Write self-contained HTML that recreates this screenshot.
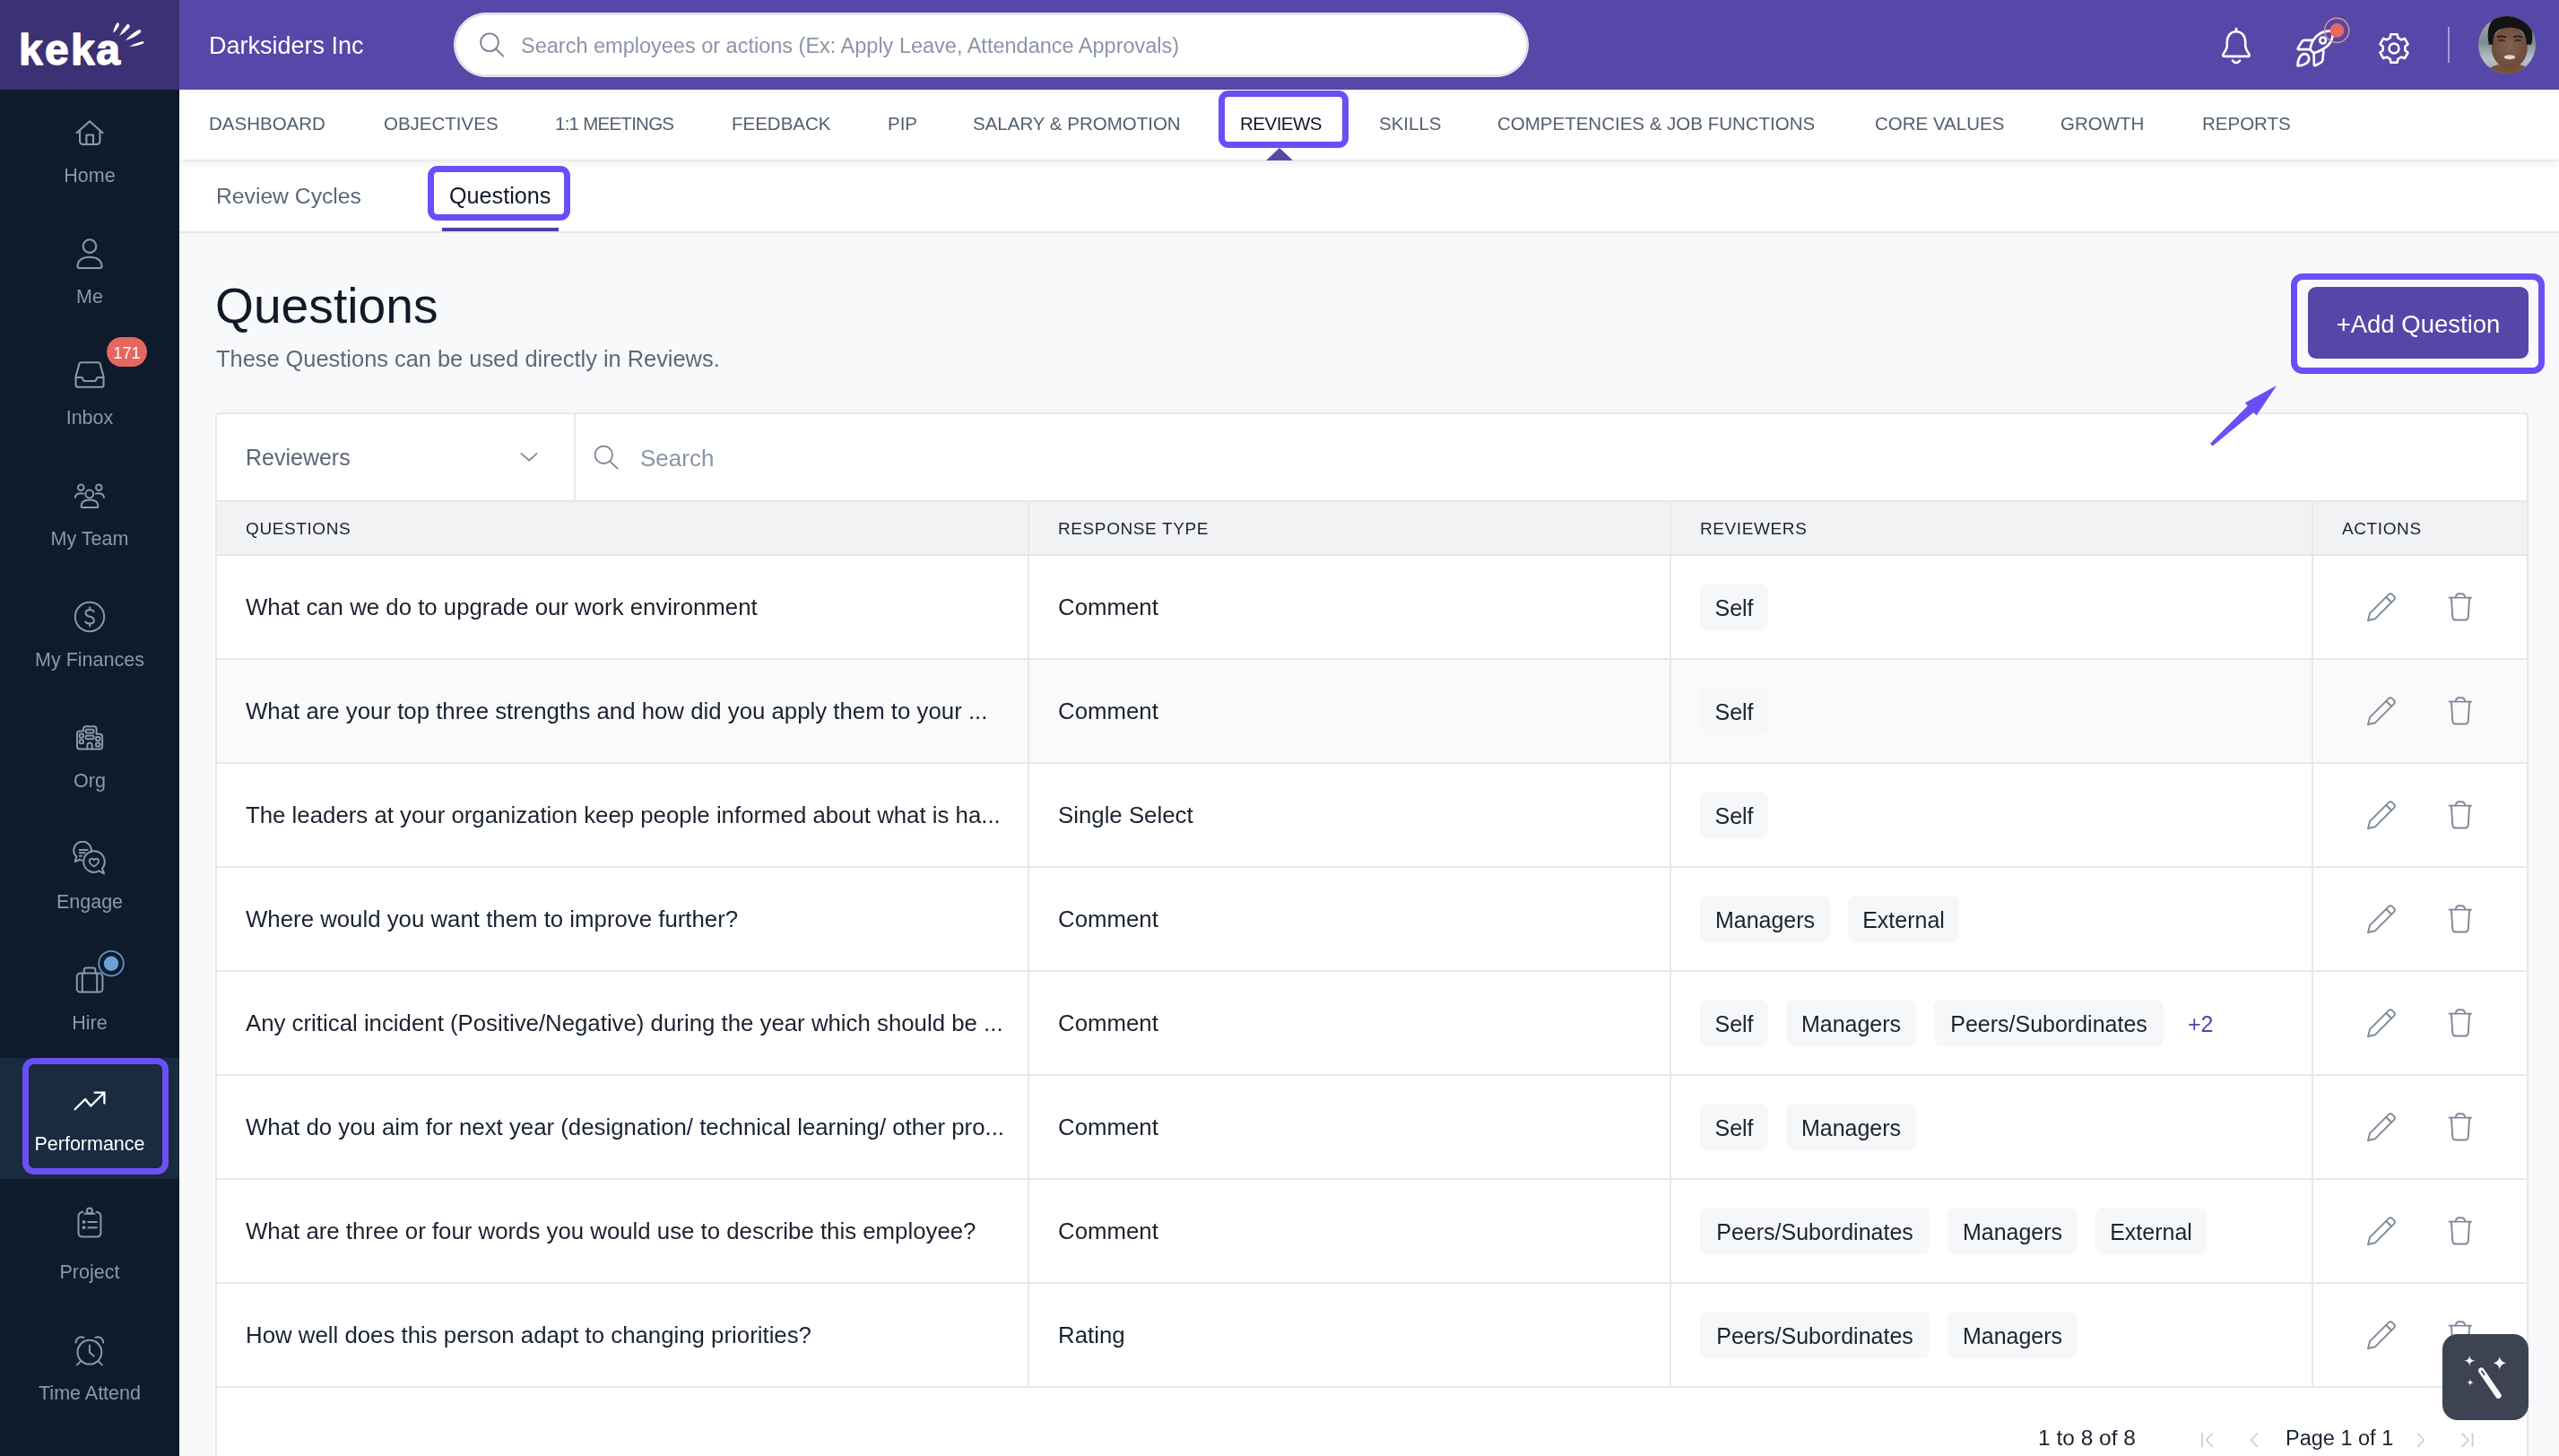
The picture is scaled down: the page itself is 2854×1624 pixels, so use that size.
<!DOCTYPE html>
<html><head><meta charset="utf-8">
<style>
*{box-sizing:border-box;margin:0;padding:0}
html,body{width:2854px;height:1624px;overflow:hidden;background:#f8f9fb;font-family:"Liberation Sans",sans-serif}
.t{will-change:transform}
.a{position:absolute}
.t{position:absolute;line-height:1;white-space:nowrap}
#logo{left:0;top:0;width:200px;height:100px;background:#3c3175}
#hdr{left:200px;top:0;width:2654px;height:100px;background:#5647a8}
#side{left:0;top:100px;width:200px;height:1524px;background:#0e1b2a}
#nav{left:200px;top:100px;width:2654px;height:78px;background:#fff;box-shadow:0 5px 8px rgba(30,40,50,.075),0 1px 2px rgba(30,40,50,.06);z-index:3}
#sub{left:200px;top:178px;width:2654px;height:82px;background:#fff;border-bottom:2px solid #e6e8ec;z-index:2}
.nv{font-size:20.5px;color:#536070;top:127.6px}
.hl{position:absolute;border:7px solid #6a4ff6;border-radius:11px}
.sl{font-size:21.5px;color:#8e98a5;text-align:center;width:200px;left:0}
.si{position:absolute;left:0;width:200px;display:flex;justify-content:center}
</style></head><body>
<!-- header -->
<div id="logo" class="a">
<svg class="a" style="left:0;top:0" width="200" height="100" viewBox="0 0 200 100">
<g fill="#fff">
<text x="21 50 79 107.2" y="72" font-family="Liberation Sans" font-weight="700" font-size="48" stroke="#fff" stroke-width="1.4" stroke-linejoin="round">keka</text>
<path d="M126 37 q2 -9 5 -12 q3 1 1 5 q-3 5 -6 7z"/>
<path d="M133 40 q4 -8 9 -13 q4 0 2 4 q-5 6 -11 9z"/>
<path d="M140 45 q6 -7 15 -12 q4 1 1 4 q-8 6 -16 8z"/>
<path d="M144 52 q7 -4 15 -6 q3 1 0 3 q-7 3 -15 3z"/>
</g></svg>
</div>
<div id="hdr" class="a"></div>
<div class="t" style="left:233px;top:38.1px;font-size:27px;color:#fff">Darksiders Inc</div>
<div class="a" style="left:506px;top:14px;width:1199px;height:72px;background:#fff;border-radius:36px;border:1px solid #eceef3;box-shadow:inset 0 0 0 1.5px #d6d8e2"></div>
<svg class="a" style="left:530px;top:33px" width="36" height="36" viewBox="0 0 36 36"><circle cx="16" cy="14.25" r="9.9" fill="none" stroke="#7b8598" stroke-width="1.9"/><path d="M22.8 21.3 L31.3 29.6" stroke="#7b8598" stroke-width="2" stroke-linecap="round"/></svg>
<div class="t" style="left:581px;top:40.1px;font-size:23.5px;color:#8b95a7">Search employees or actions (Ex: Apply Leave, Attendance Approvals)</div>


<!-- header right icons -->
<svg class="a" style="left:2474px;top:28px" width="40" height="48" viewBox="0 0 40 48" fill="none" stroke="#fff" stroke-width="2.6" stroke-linecap="round" stroke-linejoin="round">
<path d="M20 4 V6.8"/><path d="M20 7.2 C13.5 7.2 9.8 12.5 9.8 19 V22.5 C9.8 26.5 7.5 29.5 5.6 32.3 Q4.2 34.8 7.2 34.9 H32.8 Q35.8 34.8 34.4 32.3 C32.5 29.5 30.2 26.5 30.2 22.5 V19 C30.2 12.5 26.5 7.2 20 7.2 Z"/><path d="M16 39.6 Q20 44.5 24 39.6"/></svg>
<svg class="a" style="left:2558px;top:30px" width="48" height="48" viewBox="0 0 48 48" fill="none" stroke="#fff" stroke-width="2.7" stroke-linecap="round" stroke-linejoin="round">
<path d="M18.6 25.2 C19.6 14.5 27.5 5 39.5 4.6 Q43.8 4.4 43.6 8.6 C43.2 17.5 37.5 24.5 22.6 29.2 Q20.2 27.4 18.6 25.2 Z"/><circle cx="32.6" cy="15.1" r="3.4"/>
<path d="M18.6 25.2 L5.6 25.2 Q4.2 25 4.9 23.6 L9.2 16.6 Q10.4 14.8 12.6 14.8 L20.8 14.8"/>
<path d="M22.6 29.2 L22.9 42.2 Q23.1 43.6 24.4 43 L30.4 39.9 Q32.2 38.9 32.4 36.9 L33.4 27"/>
<path d="M4.6 43.4 C4.7 35 8 30.2 12.4 30.2 C15.4 30.2 17.4 32.6 17.2 35.6 C16.9 40 12 43.1 4.6 43.4 Z"/></svg>
<svg class="a" style="left:2587px;top:14px" width="40" height="40" viewBox="0 0 40 40"><circle cx="19.2" cy="19.9" r="13.6" fill="none" stroke="#df958d" stroke-width="1.4"/><circle cx="19.5" cy="20" r="7.9" fill="#e8695f"/></svg>
<svg class="a" style="left:2650px;top:34px" width="40" height="40" viewBox="0 0 40 40" fill="none" stroke="#fff" stroke-width="2.6" stroke-linejoin="round">
<path d="M15.69 8.16 L16.36 4.22 L23.64 4.22 L24.31 8.16 L28.10 10.35 L31.85 8.95 L35.49 15.26 L32.41 17.81 L32.41 22.19 L35.49 24.74 L31.85 31.05 L28.10 29.65 L24.31 31.84 L23.64 35.78 L16.36 35.78 L15.69 31.84 L11.90 29.65 L8.15 31.05 L4.51 24.74 L7.59 22.19 L7.59 17.81 L4.51 15.26 L8.15 8.95 L11.90 10.35 Z"/><circle cx="20" cy="20" r="5.4"/></svg>
<div class="a" style="left:2730px;top:30px;width:2px;height:40px;background:#a39be0"></div>
<svg class="a" style="left:2764px;top:18px" width="64" height="64" viewBox="0 0 64 64">
<defs><clipPath id="av"><circle cx="32" cy="32" r="32"/></clipPath><linearGradient id="avbg" x1="0" y1="0" x2="0" y2="1"><stop offset="0" stop-color="#9fabb2"/><stop offset=".45" stop-color="#7d8c92"/><stop offset=".75" stop-color="#b7c2c7"/><stop offset="1" stop-color="#98a5ab"/></linearGradient>
<radialGradient id="face" cx=".5" cy=".45" r=".55"><stop offset="0" stop-color="#86624e"/><stop offset="1" stop-color="#6a4a3a"/></radialGradient></defs>
<g clip-path="url(#av)"><rect width="64" height="64" fill="url(#avbg)"/>
<path d="M6 64 Q14 53 34 53 Q54 53 62 64 Z" fill="#7a5034"/>
<ellipse cx="34.8" cy="35" rx="20" ry="23.5" fill="url(#face)"/>
<path d="M12.5 31 Q9.5 16 15.5 6 Q23 -3 36 -2 Q52 -1 58 12 Q61 22 58.5 31 L54.5 31 Q54 18.5 47 14.5 Q41 11.5 34.8 12 Q28 11.5 22.5 14.5 Q15.5 18.5 15.5 31 Z" fill="#131313" stroke="#131313" stroke-width="1.6"/>
<path d="M21 23.5 Q26 21.5 31 23.5 M39 23.5 Q44 21.5 49 23.5" stroke="#2e1f17" stroke-width="2.2" fill="none"/>
<path d="M22.5 27.5 Q26 26 29.5 27.8 M40.5 27.8 Q44 26 47.5 27.5" stroke="#3a281e" stroke-width="2" fill="none"/>
<ellipse cx="35" cy="45.8" rx="6.2" ry="2.5" fill="#e4d2cc"/>
</g></svg>

<!-- nav -->
<div id="nav" class="a"></div>
<div class="a" style="left:0;top:0;z-index:4">
<div class="t nv" style="left:233px">DASHBOARD</div>
<div class="t nv" style="left:428px">OBJECTIVES</div>
<div class="t nv" style="left:619px;letter-spacing:-0.75px">1:1 MEETINGS</div>
<div class="t nv" style="left:816px">FEEDBACK</div>
<div class="t nv" style="left:989.5px">PIP</div>
<div class="t nv" style="left:1084.5px">SALARY &amp; PROMOTION</div>
<div class="t nv" style="left:1383px;color:#111827;letter-spacing:-0.5px">REVIEWS</div>
<div class="t nv" style="left:1538px">SKILLS</div>
<div class="t nv" style="left:1670px">COMPETENCIES &amp; JOB FUNCTIONS</div>
<div class="t nv" style="left:2091px">CORE VALUES</div>
<div class="t nv" style="left:2298px">GROWTH</div>
<div class="t nv" style="left:2456px">REPORTS</div>
<div class="hl" style="left:1359px;top:101px;width:145px;height:64px"></div>
<svg class="a" style="left:1412px;top:165px" width="30" height="14"><path d="M0 14 L15 0 L30 14z" fill="#5647a8"/></svg>
</div>

<!-- sub tabs -->
<div id="sub" class="a"></div>
<div class="a" style="left:0;top:0;z-index:4">
<div class="t" style="left:241px;top:207px;font-size:24.7px;color:#5b6676">Review Cycles</div>
<div class="t" style="left:501px;top:206.3px;font-size:25.2px;color:#111827">Questions</div>
<div class="hl" style="left:477px;top:185px;width:159px;height:61px"></div>
<div class="a" style="left:493px;top:254px;width:130px;height:4px;background:#4f409f"></div>
</div>

<!-- sidebar -->
<div id="side" class="a"></div>
<div class="a" style="left:0;top:1180px;width:200px;height:135px;background:#1a2a3f"></div>
<div class="hl" style="left:25px;top:1180px;width:163px;height:130px;border-radius:13px"></div>
<svg class="a" style="left:80px;top:128px" width="40" height="40" viewBox="0 0 40 40" fill="none" stroke="#8e98a5" stroke-width="2.1" stroke-linecap="round" stroke-linejoin="round">
<path d="M5.5 20.2 L20 7.2 L34.6 20.2"/><path d="M9 18 V29 Q9 33 13 33 H27.5 Q31.5 33 31.5 29 V18"/><path d="M16.4 33 V22.5 H24 V33"/></svg>
<svg class="a" style="left:80px;top:263px" width="40" height="40" viewBox="0 0 40 40" fill="none" stroke="#8e98a5" stroke-width="2.1" stroke-linejoin="round">
<circle cx="20" cy="11.6" r="7.3"/><path d="M6.5 34 C6.5 27.5 12 23.8 20 23.8 C28 23.8 33.5 27.5 33.5 34 C33.5 35.2 32.6 36 31.5 36 H8.5 C7.4 36 6.5 35.2 6.5 34 Z"/></svg>
<svg class="a" style="left:80px;top:398px" width="40" height="40" viewBox="0 0 40 40" fill="none" stroke="#8e98a5" stroke-width="2.1" stroke-linecap="round" stroke-linejoin="round">
<path d="M10 6.2 H30 Q31 6.2 31.4 7.2 L35.5 22 V31.5 Q35.5 33.8 33.2 33.8 H6.8 Q4.5 33.8 4.5 31.5 V22 L8.6 7.2 Q9 6.2 10 6.2 Z"/><path d="M4.8 23 H11.5 L13 26 Q13.5 27 14.5 27 H25.5 Q26.5 27 27 26 L28.5 23 H35.2"/></svg>
<svg class="a" style="left:80px;top:533px" width="40" height="40" viewBox="0 0 40 40" fill="none" stroke="#8e98a5" stroke-width="2" stroke-linecap="round" stroke-linejoin="round">
<circle cx="10.3" cy="10.7" r="3.3"/><circle cx="30.3" cy="10.7" r="3.3"/><circle cx="19.8" cy="18" r="4.4"/>
<path d="M3.8 21.8 Q4.5 17.2 10.5 17.2 Q12 17.2 13 17.6"/><path d="M36 21.8 Q35.3 17.2 29.5 17.2 Q28 17.2 27 17.6"/>
<path d="M10.5 32 C10.5 27 14.5 24.6 20 24.6 C25.5 24.6 29.5 27 29.5 32 Q29.5 33 28.5 33 H11.5 Q10.5 33 10.5 32 Z"/></svg>
<svg class="a" style="left:80px;top:668px" width="40" height="40" viewBox="0 0 40 40" fill="none" stroke="#8e98a5" stroke-width="2" stroke-linecap="round" stroke-linejoin="round">
<circle cx="20" cy="20" r="16.2"/><path d="M24.6 14.2 Q23.6 12.2 20.2 12.2 Q15.6 12.2 15.6 15.8 Q15.6 18.8 20.2 19.8 Q24.8 20.8 24.8 24.2 Q24.8 27.6 20.2 27.6 Q16.6 27.6 15.4 25.4"/><path d="M20.2 9.5 V12.2 M20.2 27.6 V30.4"/></svg>
<svg class="a" style="left:80px;top:803px" width="40" height="40" viewBox="0 0 40 40" fill="none" stroke="#8e98a5" stroke-width="2" stroke-linecap="round" stroke-linejoin="round">
<path d="M13 12.6 V10 Q13 7.3 15.7 7.3 H24.9 Q27.6 7.3 27.6 10 V15.8 H31.4 Q34.1 15.8 34.1 18.5 V29.8 Q34.1 32.5 31.4 32.5 H8.7 Q6 32.5 6 29.8 V15.3 Q6 12.6 8.7 12.6 Z"/>
<rect x="15.7" y="10.8" width="8.8" height="3.7" rx="1.2"/><rect x="15.7" y="17.4" width="8.8" height="3.9" rx="1.2"/>
<rect x="8.7" y="15.6" width="4.2" height="4.1" rx="1"/><rect x="8.7" y="22.2" width="4.2" height="4" rx="1"/>
<rect x="27" y="18.9" width="4.4" height="4.2" rx="1"/><rect x="27" y="25.5" width="4.4" height="4.1" rx="1"/>
<path d="M17.4 32.5 V28.2 Q17.4 25.6 20 25.6 Q22.7 25.6 22.7 28.2 V32.5"/></svg>
<svg class="a" style="left:80px;top:938px" width="40" height="40" viewBox="0 0 40 40" fill="none" stroke="#8e98a5" stroke-width="2" stroke-linecap="round" stroke-linejoin="round">
<path d="M21.8 11.8 A9.8 9.8 0 1 0 5.3 17.6 L3.8 23 L8.8 20.8 L11.4 21.6"/>
<path d="M8.8 9.9 H17.6 M8.8 13.3 H14.6 M8.8 16.7 H11"/>
<path d="M34 30.6 A11.8 11.8 0 1 0 30.6 33.4 L36 36.4 Z"/>
<path d="M24.9 21.2 Q23.4 19.4 21.6 19.9 Q19.6 20.6 19.8 23 Q20.1 25.6 24.9 28.4 Q29.7 25.6 30 23 Q30.2 20.6 28.2 19.9 Q26.4 19.4 24.9 21.2 Z"/></svg>
<svg class="a" style="left:80px;top:1073px" width="40" height="40" viewBox="0 0 40 40" fill="none" stroke="#8e98a5" stroke-width="2" stroke-linecap="round" stroke-linejoin="round">
<rect x="5.8" y="12.6" width="28.6" height="21" rx="3.5"/><path d="M13.8 12.6 V9 Q13.8 6.6 16.2 6.6 H24 Q26.4 6.6 26.4 9 V12.6"/><path d="M11.8 12.8 V33.4 M28.2 12.8 V33.4"/></svg>
<svg class="a" style="left:95px;top:1045px" width="60" height="60" viewBox="0 0 60 60"><circle cx="29" cy="29.7" r="13.8" fill="none" stroke="#5f93cb" stroke-width="1.8"/><circle cx="29" cy="29.7" r="8.2" fill="#6c9fd7"/></svg>
<svg class="a" style="left:80px;top:1208px" width="40" height="40" viewBox="0 0 40 40" fill="none" stroke="#fff" stroke-width="2.3" stroke-linecap="round" stroke-linejoin="round">
<path d="M3.6 29.2 L15 18 L21.2 25.6 L36.2 10.8"/><path d="M25.6 10.6 H36.4 V22.6"/></svg>
<svg class="a" style="left:80px;top:1343px" width="40" height="40" viewBox="0 0 40 40" fill="none" stroke="#8e98a5" stroke-width="2" stroke-linecap="round" stroke-linejoin="round">
<path d="M12.3 8.8 Q7.5 9.4 7.5 14 V32 Q7.5 36.6 12.3 36.6 H27.6 Q32.4 36.6 32.4 32 V14 Q32.4 9.4 27.6 8.8"/><circle cx="19.9" cy="7.4" r="3"/><path d="M14.4 10.8 H25.5"/>
<path d="M18.3 19.9 H27.8 M18.3 26.2 H27.8"/><circle cx="13.6" cy="19.9" r="0.9" fill="#8e98a5"/><circle cx="13.6" cy="26.2" r="0.9" fill="#8e98a5"/></svg>
<svg class="a" style="left:80px;top:1486px" width="40" height="40" viewBox="0 0 40 40" fill="none" stroke="#8e98a5" stroke-width="2" stroke-linecap="round" stroke-linejoin="round">
<circle cx="19.9" cy="22.2" r="13.4"/><path d="M4.6 11.6 A6.2 6.2 0 0 1 13.4 5.8"/><path d="M35.2 11.6 A6.2 6.2 0 0 0 26.4 5.8"/>
<path d="M9.6 32.8 L5.9 36.4 M30.2 32.8 L33.9 36.4"/><path d="M19.9 14.4 V22.4 L24.8 26.6"/></svg>
<div class="a" style="left:119px;top:376px;width:45px;height:32.5px;border-radius:17px;background:#e6675f"></div>
<div class="t" style="left:119px;width:45px;text-align:center;top:385.3px;font-size:18.2px;color:#fff">171</div>
<div class="t sl" style="top:186.0px">Home</div>
<div class="t sl" style="top:321.0px">Me</div>
<div class="t sl" style="top:456.0px">Inbox</div>
<div class="t sl" style="top:591.0px">My Team</div>
<div class="t sl" style="top:726.0px">My Finances</div>
<div class="t sl" style="top:861.0px">Org</div>
<div class="t sl" style="top:996.0px">Engage</div>
<div class="t sl" style="top:1131.0px">Hire</div>
<div class="t sl" style="top:1266.0px;color:#fff">Performance</div>
<div class="t sl" style="top:1408.8px">Project</div>
<div class="t sl" style="top:1543.8px">Time Attend</div>

<!-- content -->
<div class="t" style="left:240px;top:314.3px;font-size:55.2px;color:#131a26">Questions</div>
<div class="t" style="left:241px;top:387.5px;font-size:25.4px;color:#5e6878">These Questions can be used directly in Reviews.</div>
<div class="hl" style="left:2555px;top:305px;width:283px;height:112px;border-radius:13px"></div>
<div class="a" style="left:2574px;top:320px;width:246px;height:80px;background:#5546a8;border-radius:9px"></div>
<div class="t" style="left:2574px;width:246px;text-align:center;top:347.7px;font-size:27.5px;color:#fff">+Add Question</div>
<svg class="a" style="left:2450px;top:420px;z-index:7" width="100" height="90" viewBox="0 0 100 90"><path d="M14.9 74.7 L17.6 77.4 L63.4 40 L66.6 43.5 L89.1 9.9 L53.8 29.2 L56.7 32.7 Z" fill="#6a4ff6"/></svg>
<div class="a" style="left:240px;top:460px;width:2580px;height:100px;background:#fff;border:2px solid #e7e8eb;border-radius:3px 3px 0 0"></div>
<div class="a" style="left:640px;top:462px;width:2px;height:96px;background:#e7e8eb"></div>
<div class="t" style="left:274px;top:497.8px;font-size:25px;color:#5b6676">Reviewers</div>
<svg class="a" style="left:578px;top:500px" width="24" height="20" viewBox="0 0 24 20" fill="none" stroke="#7d8796" stroke-width="1.7" stroke-linecap="round" stroke-linejoin="round"><path d="M3.3 5.9 L12.1 13.5 L20.6 5.9"/></svg>
<svg class="a" style="left:658px;top:493px" width="36" height="36" viewBox="0 0 36 36" fill="none" stroke="#7d8796" stroke-width="1.8" stroke-linecap="round"><circle cx="15.3" cy="14.3" r="9.7"/><path d="M21.9 21.4 L30.8 29.6"/></svg>
<div class="t" style="left:714px;top:498px;font-size:26px;color:#8b95a7">Search</div>
<div class="a" style="left:240px;top:558px;width:2580px;height:1066px;background:#fff;border-left:2px solid #e7e8eb;border-right:2px solid #e7e8eb"></div>
<div class="a" style="left:242px;top:558px;width:2576px;height:62px;background:#f1f2f4;border-top:2px solid #e7e8eb;border-bottom:2px solid #e7e8eb"></div>
<div class="t" style="left:274px;top:579.9px;font-size:19px;letter-spacing:0.6px;color:#1b2330">QUESTIONS</div>
<div class="t" style="left:1180px;top:579.9px;font-size:19px;letter-spacing:0.6px;color:#1b2330">RESPONSE TYPE</div>
<div class="t" style="left:1896px;top:579.9px;font-size:19px;letter-spacing:0.6px;color:#1b2330">REVIEWERS</div>
<div class="t" style="left:2612px;top:579.9px;font-size:19px;letter-spacing:0.6px;color:#1b2330">ACTIONS</div>
<div class="a" style="left:242px;top:620px;width:2576px;height:116px;background:#fff;border-bottom:2px solid #e7e8eb"></div>
<div class="t" style="left:274px;top:665.1px;font-size:25.8px;color:#1b2330">What can we do to upgrade our work environment</div>
<div class="t" style="left:1180px;top:665.1px;font-size:25.8px;color:#1b2330">Comment</div>
<div class="a" style="left:1896px;top:651px;width:76px;height:52px;background:#f6f7f9;border-radius:8px"></div>
<div class="t" style="left:1896px;width:76px;text-align:center;top:665.8px;font-size:25px;color:#1b2330">Self</div>
<svg class="a" style="left:2636px;top:657px" width="40" height="40" viewBox="0 0 40 40" fill="none" stroke="#7f8998" stroke-width="1.9" stroke-linejoin="round"><path d="M5 35 L7 27.2 L28 6.2 Q30 4.2 32 6.2 L34 8.2 Q36 10.2 34 12.2 L13 33.2 Z"/><path d="M25.2 9 L31.2 15"/></svg>
<svg class="a" style="left:2724px;top:657px" width="40" height="40" viewBox="0 0 40 40" fill="none" stroke="#7f8998" stroke-width="1.9" stroke-linecap="round" stroke-linejoin="round"><path d="M7.6 9.6 H32.2"/><path d="M14.6 9.4 Q15.6 5.3 18.6 5.3 H21.4 Q24.4 5.3 25.4 9.4"/><path d="M9.9 9.8 L11.3 31.4 Q11.6 34.5 14.6 34.5 H25.4 Q28.4 34.5 28.7 31.4 L30.1 9.8"/></svg>
<div class="a" style="left:242px;top:736px;width:2576px;height:116px;background:#fafafb;border-bottom:2px solid #e7e8eb"></div>
<div class="t" style="left:274px;top:781.1px;font-size:25.8px;color:#1b2330">What are your top three strengths and how did you apply them to your ...</div>
<div class="t" style="left:1180px;top:781.1px;font-size:25.8px;color:#1b2330">Comment</div>
<div class="a" style="left:1896px;top:767px;width:76px;height:52px;background:#f6f7f9;border-radius:8px"></div>
<div class="t" style="left:1896px;width:76px;text-align:center;top:781.8px;font-size:25px;color:#1b2330">Self</div>
<svg class="a" style="left:2636px;top:773px" width="40" height="40" viewBox="0 0 40 40" fill="none" stroke="#7f8998" stroke-width="1.9" stroke-linejoin="round"><path d="M5 35 L7 27.2 L28 6.2 Q30 4.2 32 6.2 L34 8.2 Q36 10.2 34 12.2 L13 33.2 Z"/><path d="M25.2 9 L31.2 15"/></svg>
<svg class="a" style="left:2724px;top:773px" width="40" height="40" viewBox="0 0 40 40" fill="none" stroke="#7f8998" stroke-width="1.9" stroke-linecap="round" stroke-linejoin="round"><path d="M7.6 9.6 H32.2"/><path d="M14.6 9.4 Q15.6 5.3 18.6 5.3 H21.4 Q24.4 5.3 25.4 9.4"/><path d="M9.9 9.8 L11.3 31.4 Q11.6 34.5 14.6 34.5 H25.4 Q28.4 34.5 28.7 31.4 L30.1 9.8"/></svg>
<div class="a" style="left:242px;top:852px;width:2576px;height:116px;background:#fff;border-bottom:2px solid #e7e8eb"></div>
<div class="t" style="left:274px;top:897.1px;font-size:25.8px;color:#1b2330">The leaders at your organization keep people informed about what is ha...</div>
<div class="t" style="left:1180px;top:897.1px;font-size:25.8px;color:#1b2330">Single Select</div>
<div class="a" style="left:1896px;top:883px;width:76px;height:52px;background:#f6f7f9;border-radius:8px"></div>
<div class="t" style="left:1896px;width:76px;text-align:center;top:897.8px;font-size:25px;color:#1b2330">Self</div>
<svg class="a" style="left:2636px;top:889px" width="40" height="40" viewBox="0 0 40 40" fill="none" stroke="#7f8998" stroke-width="1.9" stroke-linejoin="round"><path d="M5 35 L7 27.2 L28 6.2 Q30 4.2 32 6.2 L34 8.2 Q36 10.2 34 12.2 L13 33.2 Z"/><path d="M25.2 9 L31.2 15"/></svg>
<svg class="a" style="left:2724px;top:889px" width="40" height="40" viewBox="0 0 40 40" fill="none" stroke="#7f8998" stroke-width="1.9" stroke-linecap="round" stroke-linejoin="round"><path d="M7.6 9.6 H32.2"/><path d="M14.6 9.4 Q15.6 5.3 18.6 5.3 H21.4 Q24.4 5.3 25.4 9.4"/><path d="M9.9 9.8 L11.3 31.4 Q11.6 34.5 14.6 34.5 H25.4 Q28.4 34.5 28.7 31.4 L30.1 9.8"/></svg>
<div class="a" style="left:242px;top:968px;width:2576px;height:116px;background:#fff;border-bottom:2px solid #e7e8eb"></div>
<div class="t" style="left:274px;top:1013.1px;font-size:25.8px;color:#1b2330">Where would you want them to improve further?</div>
<div class="t" style="left:1180px;top:1013.1px;font-size:25.8px;color:#1b2330">Comment</div>
<div class="a" style="left:1896px;top:999px;width:145px;height:52px;background:#f6f7f9;border-radius:8px"></div>
<div class="t" style="left:1896px;width:145px;text-align:center;top:1013.8px;font-size:25px;color:#1b2330">Managers</div>
<div class="a" style="left:2061px;top:999px;width:124px;height:52px;background:#f6f7f9;border-radius:8px"></div>
<div class="t" style="left:2061px;width:124px;text-align:center;top:1013.8px;font-size:25px;color:#1b2330">External</div>
<svg class="a" style="left:2636px;top:1005px" width="40" height="40" viewBox="0 0 40 40" fill="none" stroke="#7f8998" stroke-width="1.9" stroke-linejoin="round"><path d="M5 35 L7 27.2 L28 6.2 Q30 4.2 32 6.2 L34 8.2 Q36 10.2 34 12.2 L13 33.2 Z"/><path d="M25.2 9 L31.2 15"/></svg>
<svg class="a" style="left:2724px;top:1005px" width="40" height="40" viewBox="0 0 40 40" fill="none" stroke="#7f8998" stroke-width="1.9" stroke-linecap="round" stroke-linejoin="round"><path d="M7.6 9.6 H32.2"/><path d="M14.6 9.4 Q15.6 5.3 18.6 5.3 H21.4 Q24.4 5.3 25.4 9.4"/><path d="M9.9 9.8 L11.3 31.4 Q11.6 34.5 14.6 34.5 H25.4 Q28.4 34.5 28.7 31.4 L30.1 9.8"/></svg>
<div class="a" style="left:242px;top:1084px;width:2576px;height:116px;background:#fff;border-bottom:2px solid #e7e8eb"></div>
<div class="t" style="left:274px;top:1129.1px;font-size:25.8px;color:#1b2330">Any critical incident (Positive/Negative) during the year which should be ...</div>
<div class="t" style="left:1180px;top:1129.1px;font-size:25.8px;color:#1b2330">Comment</div>
<div class="a" style="left:1896px;top:1115px;width:76px;height:52px;background:#f6f7f9;border-radius:8px"></div>
<div class="t" style="left:1896px;width:76px;text-align:center;top:1129.8px;font-size:25px;color:#1b2330">Self</div>
<div class="a" style="left:1992px;top:1115px;width:145px;height:52px;background:#f6f7f9;border-radius:8px"></div>
<div class="t" style="left:1992px;width:145px;text-align:center;top:1129.8px;font-size:25px;color:#1b2330">Managers</div>
<div class="a" style="left:2157px;top:1115px;width:256px;height:52px;background:#f6f7f9;border-radius:8px"></div>
<div class="t" style="left:2157px;width:256px;text-align:center;top:1129.8px;font-size:25px;color:#1b2330">Peers/Subordinates</div>
<div class="t" style="left:2440px;top:1129.8px;font-size:25px;color:#5546a8">+2</div>
<svg class="a" style="left:2636px;top:1121px" width="40" height="40" viewBox="0 0 40 40" fill="none" stroke="#7f8998" stroke-width="1.9" stroke-linejoin="round"><path d="M5 35 L7 27.2 L28 6.2 Q30 4.2 32 6.2 L34 8.2 Q36 10.2 34 12.2 L13 33.2 Z"/><path d="M25.2 9 L31.2 15"/></svg>
<svg class="a" style="left:2724px;top:1121px" width="40" height="40" viewBox="0 0 40 40" fill="none" stroke="#7f8998" stroke-width="1.9" stroke-linecap="round" stroke-linejoin="round"><path d="M7.6 9.6 H32.2"/><path d="M14.6 9.4 Q15.6 5.3 18.6 5.3 H21.4 Q24.4 5.3 25.4 9.4"/><path d="M9.9 9.8 L11.3 31.4 Q11.6 34.5 14.6 34.5 H25.4 Q28.4 34.5 28.7 31.4 L30.1 9.8"/></svg>
<div class="a" style="left:242px;top:1200px;width:2576px;height:116px;background:#fff;border-bottom:2px solid #e7e8eb"></div>
<div class="t" style="left:274px;top:1245.1px;font-size:25.8px;color:#1b2330">What do you aim for next year (designation/ technical learning/ other pro...</div>
<div class="t" style="left:1180px;top:1245.1px;font-size:25.8px;color:#1b2330">Comment</div>
<div class="a" style="left:1896px;top:1231px;width:76px;height:52px;background:#f6f7f9;border-radius:8px"></div>
<div class="t" style="left:1896px;width:76px;text-align:center;top:1245.8px;font-size:25px;color:#1b2330">Self</div>
<div class="a" style="left:1992px;top:1231px;width:145px;height:52px;background:#f6f7f9;border-radius:8px"></div>
<div class="t" style="left:1992px;width:145px;text-align:center;top:1245.8px;font-size:25px;color:#1b2330">Managers</div>
<svg class="a" style="left:2636px;top:1237px" width="40" height="40" viewBox="0 0 40 40" fill="none" stroke="#7f8998" stroke-width="1.9" stroke-linejoin="round"><path d="M5 35 L7 27.2 L28 6.2 Q30 4.2 32 6.2 L34 8.2 Q36 10.2 34 12.2 L13 33.2 Z"/><path d="M25.2 9 L31.2 15"/></svg>
<svg class="a" style="left:2724px;top:1237px" width="40" height="40" viewBox="0 0 40 40" fill="none" stroke="#7f8998" stroke-width="1.9" stroke-linecap="round" stroke-linejoin="round"><path d="M7.6 9.6 H32.2"/><path d="M14.6 9.4 Q15.6 5.3 18.6 5.3 H21.4 Q24.4 5.3 25.4 9.4"/><path d="M9.9 9.8 L11.3 31.4 Q11.6 34.5 14.6 34.5 H25.4 Q28.4 34.5 28.7 31.4 L30.1 9.8"/></svg>
<div class="a" style="left:242px;top:1316px;width:2576px;height:116px;background:#fff;border-bottom:2px solid #e7e8eb"></div>
<div class="t" style="left:274px;top:1361.1px;font-size:25.8px;color:#1b2330">What are three or four words you would use to describe this employee?</div>
<div class="t" style="left:1180px;top:1361.1px;font-size:25.8px;color:#1b2330">Comment</div>
<div class="a" style="left:1896px;top:1347px;width:256px;height:52px;background:#f6f7f9;border-radius:8px"></div>
<div class="t" style="left:1896px;width:256px;text-align:center;top:1361.8px;font-size:25px;color:#1b2330">Peers/Subordinates</div>
<div class="a" style="left:2172px;top:1347px;width:145px;height:52px;background:#f6f7f9;border-radius:8px"></div>
<div class="t" style="left:2172px;width:145px;text-align:center;top:1361.8px;font-size:25px;color:#1b2330">Managers</div>
<div class="a" style="left:2337px;top:1347px;width:124px;height:52px;background:#f6f7f9;border-radius:8px"></div>
<div class="t" style="left:2337px;width:124px;text-align:center;top:1361.8px;font-size:25px;color:#1b2330">External</div>
<svg class="a" style="left:2636px;top:1353px" width="40" height="40" viewBox="0 0 40 40" fill="none" stroke="#7f8998" stroke-width="1.9" stroke-linejoin="round"><path d="M5 35 L7 27.2 L28 6.2 Q30 4.2 32 6.2 L34 8.2 Q36 10.2 34 12.2 L13 33.2 Z"/><path d="M25.2 9 L31.2 15"/></svg>
<svg class="a" style="left:2724px;top:1353px" width="40" height="40" viewBox="0 0 40 40" fill="none" stroke="#7f8998" stroke-width="1.9" stroke-linecap="round" stroke-linejoin="round"><path d="M7.6 9.6 H32.2"/><path d="M14.6 9.4 Q15.6 5.3 18.6 5.3 H21.4 Q24.4 5.3 25.4 9.4"/><path d="M9.9 9.8 L11.3 31.4 Q11.6 34.5 14.6 34.5 H25.4 Q28.4 34.5 28.7 31.4 L30.1 9.8"/></svg>
<div class="a" style="left:242px;top:1432px;width:2576px;height:116px;background:#fff;border-bottom:2px solid #e7e8eb"></div>
<div class="t" style="left:274px;top:1477.1px;font-size:25.8px;color:#1b2330">How well does this person adapt to changing priorities?</div>
<div class="t" style="left:1180px;top:1477.1px;font-size:25.8px;color:#1b2330">Rating</div>
<div class="a" style="left:1896px;top:1463px;width:256px;height:52px;background:#f6f7f9;border-radius:8px"></div>
<div class="t" style="left:1896px;width:256px;text-align:center;top:1477.8px;font-size:25px;color:#1b2330">Peers/Subordinates</div>
<div class="a" style="left:2172px;top:1463px;width:145px;height:52px;background:#f6f7f9;border-radius:8px"></div>
<div class="t" style="left:2172px;width:145px;text-align:center;top:1477.8px;font-size:25px;color:#1b2330">Managers</div>
<svg class="a" style="left:2636px;top:1469px" width="40" height="40" viewBox="0 0 40 40" fill="none" stroke="#7f8998" stroke-width="1.9" stroke-linejoin="round"><path d="M5 35 L7 27.2 L28 6.2 Q30 4.2 32 6.2 L34 8.2 Q36 10.2 34 12.2 L13 33.2 Z"/><path d="M25.2 9 L31.2 15"/></svg>
<svg class="a" style="left:2724px;top:1469px" width="40" height="40" viewBox="0 0 40 40" fill="none" stroke="#7f8998" stroke-width="1.9" stroke-linecap="round" stroke-linejoin="round"><path d="M7.6 9.6 H32.2"/><path d="M14.6 9.4 Q15.6 5.3 18.6 5.3 H21.4 Q24.4 5.3 25.4 9.4"/><path d="M9.9 9.8 L11.3 31.4 Q11.6 34.5 14.6 34.5 H25.4 Q28.4 34.5 28.7 31.4 L30.1 9.8"/></svg>
<div class="a" style="left:1146px;top:558px;width:2px;height:990px;background:#e7e8eb"></div>
<div class="a" style="left:1862px;top:558px;width:2px;height:990px;background:#e7e8eb"></div>
<div class="a" style="left:2578px;top:558px;width:2px;height:990px;background:#e7e8eb"></div>
<div class="t" style="left:2273px;top:1592.3px;font-size:24.5px;color:#1b2330">1 to 8 of 8</div>
<div class="t" style="left:2549px;top:1593.1px;font-size:23.5px;color:#1b2330">Page 1 of 1</div>
<svg class="a" style="left:2450px;top:1594px" width="320" height="24" viewBox="0 0 320 24" fill="none" stroke="#c5cad3" stroke-width="1.6" stroke-linecap="round" stroke-linejoin="round"><path d="M6 5 V19.5 M17.5 5 L10.5 12.2 L17.5 19.5"/><path d="M67.5 5 L60.5 12.2 L67.5 19.5"/><path d="M246.5 5 L253.5 12.2 L246.5 19.5"/><path d="M296 5 L303 12.2 L296 19.5 M307.5 5 V19.5"/></svg>
<div class="a" style="left:2724px;top:1488px;width:96px;height:96px;background:#3d4353;border-radius:17px;z-index:5"></div>
<svg class="a" style="left:2724px;top:1488px;z-index:6" width="96" height="96" viewBox="0 0 96 96"><path d="M30.3 22.80 C30.30 27.63 32.46 29.70 37.50 29.70 C32.46 29.70 30.30 31.77 30.30 36.60 C30.30 31.77 28.14 29.70 23.10 29.70 C28.14 29.70 30.30 27.63 30.30 22.80 Z M63.8 23.90 C63.80 28.88 67.36 32.20 72.70 32.20 C67.36 32.20 63.80 35.52 63.80 40.50 C63.80 35.52 60.24 32.20 54.90 32.20 C60.24 32.20 63.80 28.88 63.80 23.90 Z M31 49.80 C31.00 52.66 32.47 54.00 35.60 54.00 C32.47 54.00 31.00 55.34 31.00 58.20 C31.00 55.34 29.53 54.00 26.40 54.00 C29.53 54.00 31.00 52.66 31.00 49.80 Z" fill="#f7f8fa"/><path d="M43.4 40.8 L62.4 68.6" stroke="#f7f8fa" stroke-width="6.6" stroke-linecap="round"/><path d="M43.8 41.3 L46.6 45.3" stroke="#3d4353" stroke-width="1.7" stroke-linecap="round"/></svg>
</body></html>
